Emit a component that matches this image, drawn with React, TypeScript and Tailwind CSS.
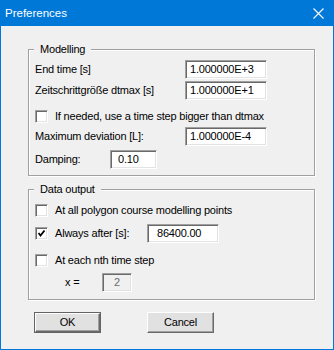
import React from "react";

const font = "font-['Liberation_Sans',sans-serif]";

function Edit({ value, className = "", disabled = false }: { value: string; className?: string; disabled?: boolean }) {
  return (
    <div
      className={`flex h-[19px] items-center border border-t-[#a0a0a0] border-l-[#a0a0a0] border-b-white border-r-white shadow-[inset_1px_1px_0_#696969,inset_-1px_-1px_0_#e3e3e3] ${
        disabled ? "bg-[#f0f0f0] text-[#6d6d6d]" : "bg-white"
      } ${className}`}
    >
      {value}
    </div>
  );
}

function Check({ checked = false }: { checked?: boolean }) {
  return (
    <div className="flex h-[13px] w-[13px] shrink-0 items-center justify-center border border-t-[#a0a0a0] border-l-[#a0a0a0] border-b-white border-r-white bg-white shadow-[inset_1px_1px_0_#696969,inset_-1px_-1px_0_#e3e3e3]">
      {checked ? (
        <svg width="9" height="9" viewBox="0 0 9 9">
          <path d="M1.5 4 L3.5 6.5 L7.5 1.5" fill="none" stroke="black" strokeWidth="1.8" />
        </svg>
      ) : null}
    </div>
  );
}

function Group({ title, className = "", children }: { title: string; className?: string; children: React.ReactNode }) {
  return (
    <div className={`relative ml-[27px] w-[287px] border border-[#a0a0a0] shadow-[1px_1px_0_white,inset_1px_1px_0_white] ${className}`}>
      <span className="absolute left-[5px] top-[-8px] bg-[#f0f0f0] px-[6px] leading-[14px]">{title}</span>
      {children}
    </div>
  );
}

function Button({ label, isDefault = false }: { label: string; isDefault?: boolean }) {
  return (
    <div className={`h-[21px] w-[67px] ${isDefault ? "border border-[#646464]" : ""}`}>
      <div className="flex h-full w-full items-center justify-center border border-t-white border-l-white border-b-[#696969] border-r-[#696969] bg-[#e1e1e1] shadow-[inset_-1px_-1px_0_#a0a0a0]">
        {label}
      </div>
    </div>
  );
}

export default function App() {
  return (
    <div className={`flex h-[350px] w-[334px] flex-col border border-[#0078d7] bg-[#f0f0f0] text-[11px] tracking-[-0.2px] text-black ${font}`}>
      <div className="flex h-[25px] shrink-0 items-center justify-between bg-[#0078d7] pl-[4px] pr-[9px] text-white">
        <span className="text-[11.5px] tracking-normal">Preferences</span>
        <svg width="11" height="11" viewBox="0 0 11 11">
          <path d="M0.5 0.5 L10.5 10.5 M10.5 0.5 L0.5 10.5" stroke="white" strokeWidth="1.1" />
        </svg>
      </div>

      <Group title="Modelling" className="mt-[23px] h-[127px]">
        <div className="mt-[10px] flex h-[19px] items-center pl-[6px] pr-[47px]">
          <span>End time [s]</span>
          <Edit value="1.000000E+3" className="ml-auto w-[82px] pl-[4px]" />
        </div>
        <div className="mt-[2px] flex h-[19px] items-center pl-[6px] pr-[47px]">
          <span>Zeitschrittgröße dtmax [s]</span>
          <Edit value="1.000000E+1" className="ml-auto w-[82px] pl-[4px]" />
        </div>
        <div className="mt-[7px] flex h-[19px] items-center gap-[7px] pl-[6px]">
          <Check />
          <span>If needed, use a time step bigger than dtmax</span>
        </div>
        <div className="mt-[1px] flex h-[19px] items-center pl-[6px] pr-[47px]">
          <span>Maximum deviation [L]:</span>
          <Edit value="1.000000E-4" className="ml-auto w-[82px] pl-[4px]" />
        </div>
        <div className="mt-[4px] flex h-[19px] items-center pl-[6px]">
          <span className="w-[75px]">Damping:</span>
          <Edit value="0.10" className="w-[47px] pl-[7px]" />
        </div>
      </Group>

      <Group title="Data output" className="mt-[13px] h-[111px]">
        <div className="mt-[11px] flex h-[19px] items-center gap-[7px] pl-[6px]">
          <Check />
          <span>At all polygon course modelling points</span>
        </div>
        <div className="mt-[4px] flex h-[19px] items-center pl-[6px]">
          <Check checked />
          <span className="ml-[7px] w-[92px]">Always after [s]:</span>
          <Edit value="86400.00" className="w-[72px] pl-[9px]" />
        </div>
        <div className="mt-[8px] flex h-[19px] items-center gap-[7px] pl-[6px]">
          <Check />
          <span>At each nth time step</span>
        </div>
        <div className="mt-[3px] flex h-[19px] items-center pl-[36px]">
          <span className="w-[37px]">x =</span>
          <Edit value="2" disabled className="w-[30px] justify-center" />
        </div>
      </Group>

      <div className="ml-[33px] mt-[12px] flex gap-[46px]">
        <Button label="OK" isDefault />
        <Button label="Cancel" />
      </div>
    </div>
  );
}
